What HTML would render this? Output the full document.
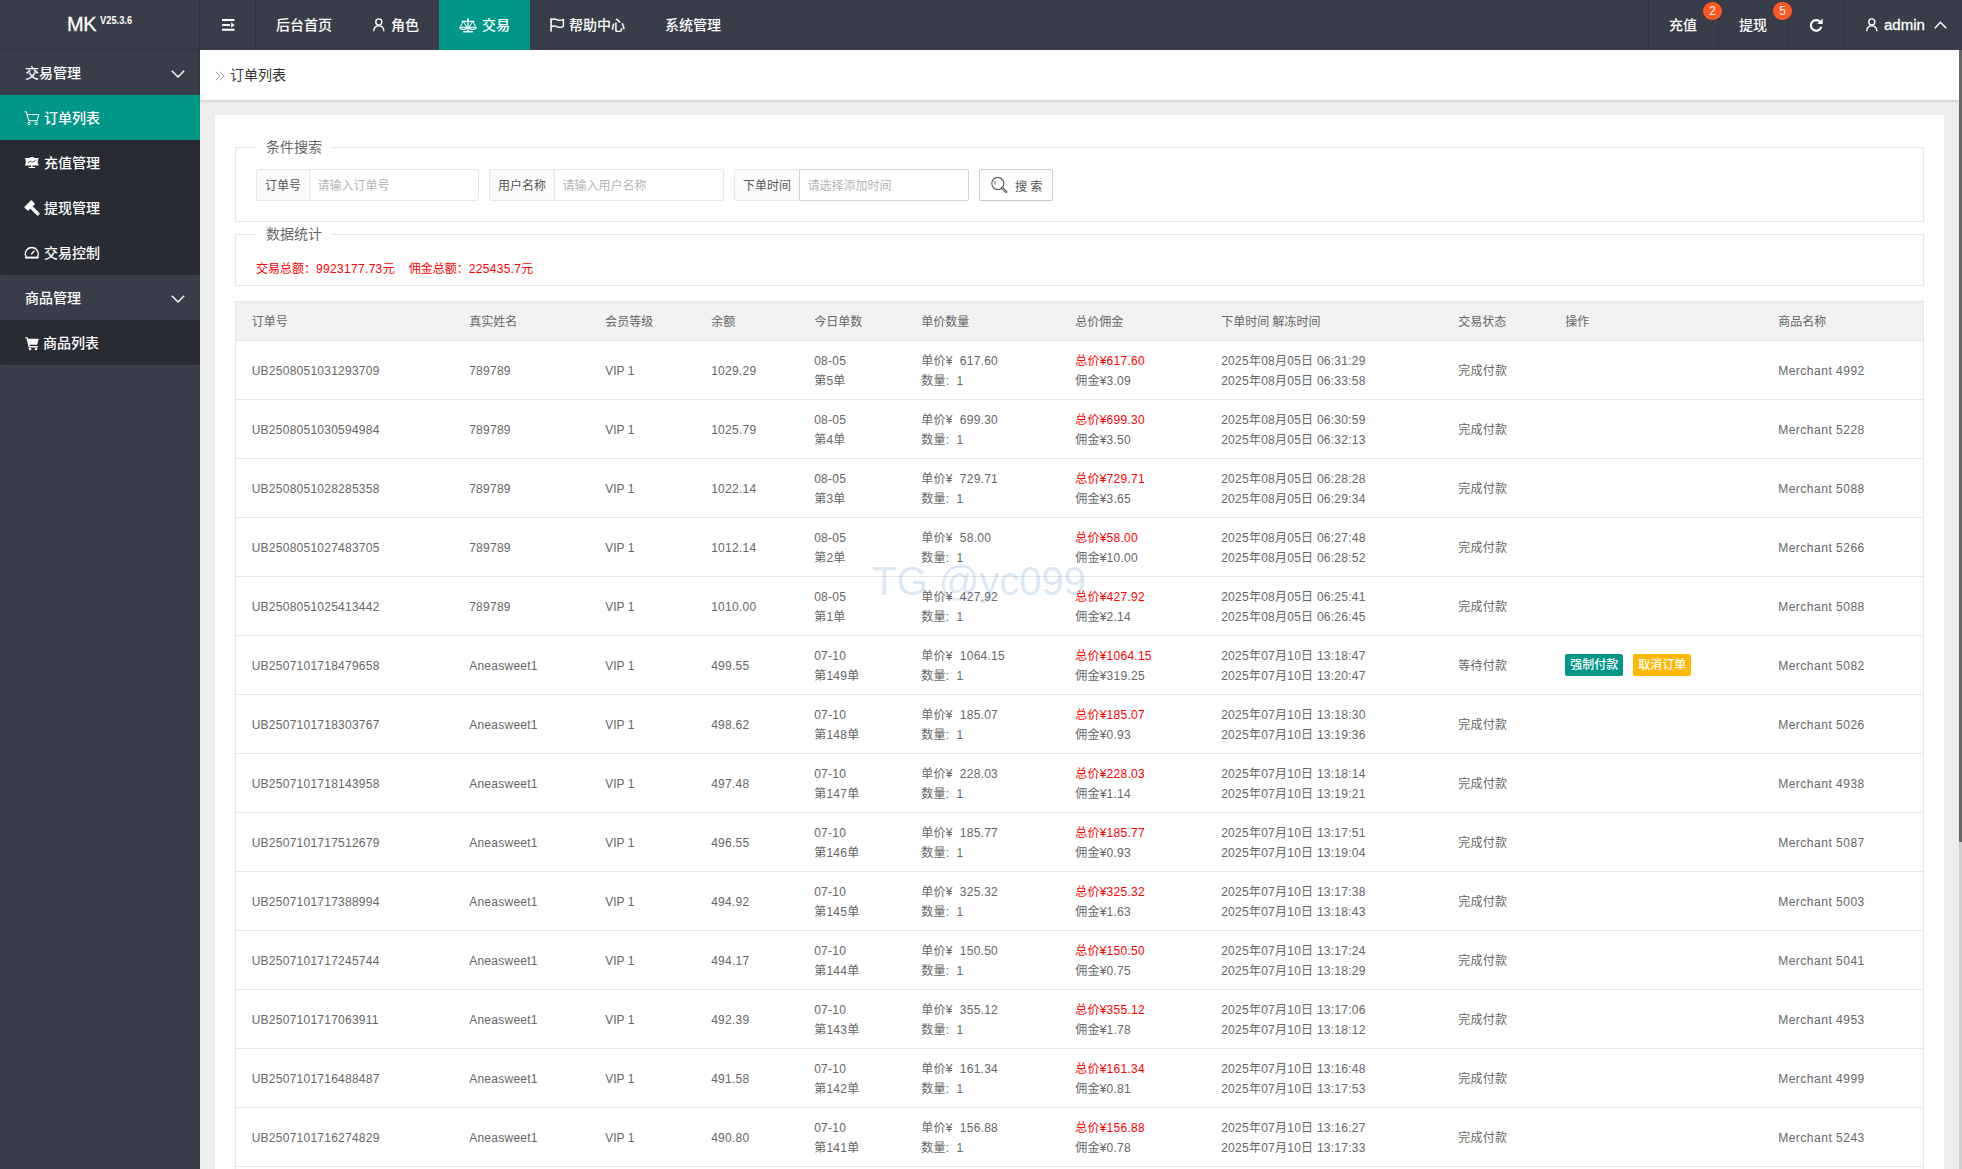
<!DOCTYPE html>
<html lang="zh-CN">
<head>
<meta charset="utf-8">
<title>订单列表</title>
<style>
*{box-sizing:border-box;margin:0;padding:0}
html,body{width:1962px;height:1169px;overflow:hidden;background:#eee}
body{font-family:"Liberation Sans","Noto Sans CJK SC",sans-serif;font-size:14px;color:#333;position:relative;line-height:1}
a{text-decoration:none;color:inherit}
ul{list-style:none}
svg{display:block}

/* ---------- header ---------- */
.header{position:absolute;left:0;top:0;width:1962px;height:50px;background:#393D49;z-index:10}
.logo{position:absolute;left:0;top:0;width:200px;height:50px;color:#fff;border-bottom:1px solid rgba(0,0,0,.16)}
.logo .mk{position:absolute;left:67px;top:13px;font-size:20px;line-height:22px;color:#fff;-webkit-text-stroke:.3px #fff;letter-spacing:-.3px}
.logo .ver{position:absolute;left:100px;top:15px;font-size:10px;line-height:11px;font-weight:bold;color:#fff;transform:scaleX(.93);transform-origin:0 0}
.nav{position:absolute;left:200px;top:0;height:50px}
.nav .it{position:absolute;top:0;height:50px;line-height:50px;color:#fff;font-size:14px;white-space:nowrap;font-weight:500}
.nav .it.on{background:#009688;color:#fff}
.nav .it svg{position:absolute}
.sep{position:absolute;top:0;width:1px;height:50px;background:rgba(0,0,0,.18)}
.badge{position:absolute;top:2px;width:19px;height:18px;border-radius:9px;background:#FF5722;color:#fff;font-size:12px;line-height:18px;text-align:center}

/* ---------- side ---------- */
.side{position:absolute;left:0;top:50px;width:200px;height:1119px;background:#393D49}
.side .grp{position:relative;height:45px;line-height:47px;padding-left:25px;color:#fff;font-size:14px;font-weight:500}
.side .grp svg{position:absolute;left:171px;top:19.6px}
.side .child{background:#282B33;border-radius:2px}
.side .child a{display:block;position:relative;height:45px;line-height:47px;padding-left:44px;color:#fff;font-size:14px;font-weight:500}
.side .child a.on{background:#009688;color:#fff}
.side .child a svg{position:absolute;left:25px;top:15px}

/* ---------- body ---------- */
.crumb{position:absolute;left:200px;top:50px;width:1759px;height:50px;background:#fff;box-shadow:0 1px 3px 0 rgba(0,0,0,.18);line-height:50px;font-size:14px;color:#333}
.crumb .arr{position:absolute;left:15px;top:21px}
.crumb .tt{position:absolute;left:30px;top:0}
.card{position:absolute;left:215px;top:115px;width:1729px;height:1100px;background:#fff;box-shadow:0 1px 2px 0 rgba(0,0,0,.05)}
.fs{position:absolute;left:20px;width:1689px;border:1px solid #e6e6e6}
.fs .lg{position:absolute;left:20px;top:-13px;height:24px;line-height:24px;padding:0 10px;background:#fff;font-size:14px;color:#666}
.grpi{position:absolute;top:21px;height:32px}
.grpi .lb{position:absolute;left:0;top:0;height:32px;line-height:33px;background:#fbfbfb;border:1px solid #e6e6e6;border-radius:2px 0 0 2px;color:#555;font-size:12px;text-align:center}
.grpi .ph{position:absolute;top:0;height:32px;line-height:33px;padding-left:7.5px;background:#fff;border:1px solid #e6e6e6;border-radius:0 2px 2px 0;color:#b5b5b5;font-size:12px}
.sbtn{position:absolute;top:21px;left:743px;width:74px;height:32px;border:1px solid #c9c9c9;border-radius:2px;background:#fff;color:#555;font-size:12px;line-height:33px}
.sbtn svg{position:absolute;left:11px;top:7px}
.sbtn span{position:absolute;left:35px;top:.5px;letter-spacing:3.5px}
.stat{position:absolute;left:20px;top:24px;font-size:12px;line-height:20px;color:#f00;white-space:nowrap}
.stat b{font-weight:normal;letter-spacing:.32px}
.stat i{display:inline-block;width:14px}

table{position:absolute;left:20px;top:186px;width:1689px;border-collapse:collapse;table-layout:fixed;border:1px solid #e6e6e6;font-size:12px;color:#666}
th,td{padding:10px 15px 8px 15.7px;line-height:20px;text-align:left;font-weight:normal;border-bottom:1px solid #e6e6e6;white-space:nowrap;overflow:hidden;vertical-align:middle}
thead tr{background:#f2f2f2}
th{height:39px}
td{height:59px}
tbody td{letter-spacing:.25px}
tbody td:last-child{letter-spacing:.5px}
tbody td:nth-child(3){letter-spacing:0}
.red{color:#f00}
.btn{display:inline-block;position:relative;top:-1px;height:22px;line-height:23px;padding:0 5px;border-radius:2px;color:#fff;font-size:12px;vertical-align:middle;letter-spacing:0;font-weight:500}
.b1{background:#009688;margin-right:10px}
.b2{background:#FFB800}

.wm{position:absolute;left:872px;top:559px;font-size:40px;line-height:44px;color:rgba(30,110,190,.17);white-space:nowrap;z-index:20;font-family:"Liberation Sans",sans-serif}

.sbar{position:absolute;left:1959px;top:50px;width:3px;height:1119px;background:#cdcdcd}
.sbar i{position:absolute;left:0;top:0;width:3px;height:791.6px;background:#666}
</style>
</head>
<body>

<div class="header">
  <div class="logo"><span class="mk">MK</span><span class="ver">V25.3.6</span></div>
  <div class="nav">
    <div class="sep" style="left:-1px"></div>
    <div class="it" style="left:0;width:55px">
      <svg style="left:21px;top:18px" width="14" height="14" viewBox="0 0 14 14"><path d="M1 2h12.5M1 6.9h8M1 11.7h12.5" stroke="#fff" stroke-width="2" fill="none"/><path d="M10.2 4.2L13.6 7l-3.4 2.8z" fill="#fff"/></svg>
    </div>
    <div class="sep" style="left:55px"></div>
    <div class="it" style="left:76px">后台首页</div>
    <div class="it" style="left:191px">
      <svg style="left:-17.6px;top:17.6px" width="12" height="14" viewBox="0 0 12 14"><circle cx="5.8" cy="3.9" r="3" stroke="#fff" stroke-width="1.4" fill="none"/><path d="M0.7 13.2c0.2-3.4 2.1-5.3 5.1-5.3s4.9 1.9 5.1 5.3" stroke="#fff" stroke-width="1.4" fill="none"/></svg>角色</div>
    <div class="it on" style="left:239px;width:91px">
      <svg style="left:19.5px;top:17.5px" width="18" height="15" viewBox="0 0 18 15"><circle cx="9" cy="1.4" r="1.1" fill="#fff"/><path d="M2.6 3.3h12.8M9 2v11.4" stroke="#fff" stroke-width="1.25" fill="none"/><path d="M4.2 13.7h9.6" stroke="#fff" stroke-width="1.5" fill="none"/><path d="M4.4 3.4L1.1 9.2M4.4 3.4l3.3 5.8M13.6 3.4l-3.3 5.8M13.6 3.4l3.3 5.8" stroke="#fff" stroke-width="1" fill="none"/><path d="M0.5 9.2h7.8c-0.5 2.9-7.3 2.9-7.8 0zM9.7 9.2h7.8c-0.5 2.9-7.3 2.9-7.8 0z" stroke="#fff" stroke-width="1.1" fill="none" stroke-linejoin="round"/></svg>
      <span style="position:absolute;left:43px">交易</span></div>
    <div class="it" style="left:369px">
      <svg style="left:-19.4px;top:18.2px" width="15" height="14" viewBox="0 0 15 14"><path d="M1.1 0.3v13.2" stroke="#fff" stroke-width="1.6" fill="none"/><path d="M1.6 1.6c2-1.1 3.8-0.6 5.8 0.2s3.8 0.9 6 -0.4v7c-2.2 1.3-4 1.2-6 0.4s-3.8-1.3-5.8-0.2" stroke="#fff" stroke-width="1.4" fill="none" stroke-linejoin="round"/></svg>帮助中心</div>
    <div class="it" style="left:465px">系统管理</div>
  </div>

  <div class="sep" style="left:1648px"></div>
  <div class="sep" style="left:1718px"></div>
  <div class="sep" style="left:1788px"></div>
  <div class="sep" style="left:1844px"></div>
  <div class="nav" style="left:0">
    <div class="it" style="left:1669px">充值</div>
    <div class="badge" style="left:1703px">2</div>
    <div class="it" style="left:1739px">提现</div>
    <div class="badge" style="left:1773px">5</div>
    <div class="it" style="left:1809px;width:14px">
      <svg style="left:0;top:18px" width="14" height="14" viewBox="0 0 14 14"><path d="M11.5 4.3A5.3 5.3 0 1 0 12.3 8.8" stroke="#fff" stroke-width="2.1" fill="none"/><path d="M13.6 0.6v5.4H8.2z" fill="#fff"/></svg>
    </div>
    <div class="it" style="left:1884px;font-size:15px;-webkit-text-stroke:.3px #fff">
      <svg style="left:-17.6px;top:17.8px" width="12" height="14" viewBox="0 0 12 14"><circle cx="5.8" cy="3.9" r="3" stroke="#fff" stroke-width="1.4" fill="none"/><path d="M0.7 13.2c0.2-3.4 2.1-5.3 5.1-5.3s4.9 1.9 5.1 5.3" stroke="#fff" stroke-width="1.4" fill="none"/></svg>admin
      <svg style="left:50px;top:21px" width="13" height="8" viewBox="0 0 13 8"><path d="M0.8 7.2L6.5 1.2l5.7 6" stroke="#fff" stroke-width="1.4" fill="none"/></svg>
    </div>
  </div>
</div>

<div class="side">
  <div class="grp">交易管理<svg width="14" height="8" viewBox="0 0 14 8"><path d="M0.8 0.8L7 7l6.2-6.2" stroke="#fff" stroke-width="1.4" fill="none"/></svg></div>
  <div class="child">
    <a class="on"><svg style="left:24px;top:16px" width="16" height="15" viewBox="0 0 16 15"><path d="M0.6 0.8h1.7l2.5 9h8.3l1.8-6.4H3.2" stroke="#fff" stroke-width="1.05" fill="none" stroke-linejoin="round"/><circle cx="5" cy="12.6" r="1.25" stroke="#fff" stroke-width="1" fill="none"/><circle cx="12.2" cy="12.6" r="1.25" stroke="#fff" stroke-width="1" fill="none"/></svg>订单列表</a>
    <a><svg style="left:25px;top:17px" width="14" height="12" viewBox="0 0 14 12"><path d="M5 0h3.6v1.2H5zM0 1h13.6v1.3H0zM0.7 2.3h12.2v5H0.7zM0 7.3h13.6v1.3H0zM6.1 8.6h1.4v1.5H6.1zM3.4 10h6.8v1.1H3.4z" fill="#fff"/><path d="M2.8 6l2.6-1.7 2 0.9 3.2-2" stroke="#282B33" stroke-width="0.8" fill="none"/></svg>充值管理</a>
    <a><svg style="left:24px;top:15px" width="16" height="16" viewBox="0 0 16 16"><g transform="translate(5.6 5.6) rotate(45)" fill="#fff"><rect x="-2.7" y="-5.1" width="5.4" height="10.2" rx="0.7"/><rect x="2" y="-1.7" width="11.2" height="3.4" rx="1.5"/></g></svg>提现管理</a>
    <a><svg style="left:24px;top:16px" width="16" height="14" viewBox="0 0 16 14"><path d="M2.2 11A6.4 6.4 0 1 1 13.4 11" stroke="#fff" stroke-width="1.3" fill="none"/><path d="M1 11.6h13.6" stroke="#fff" stroke-width="1.9" fill="none"/><path d="M7.2 8.4l3.2-3.6" stroke="#fff" stroke-width="1.4" fill="none"/></svg>交易控制</a>
  </div>
  <div class="grp">商品管理<svg width="14" height="8" viewBox="0 0 14 8"><path d="M0.8 0.8L7 7l6.2-6.2" stroke="#fff" stroke-width="1.4" fill="none"/></svg></div>
  <div class="child">
    <a style="padding-left:43px"><svg style="top:15.7px" width="15" height="15" viewBox="0 0 15 15"><path d="M0.4 1.2h2.2l0.5 1.6h10.6l-1.5 6H4.4l0.3 1.3h8v1.3H3.6L1.6 2.5H0.4z" fill="#fff"/><circle cx="5" cy="13" r="1.3" fill="#fff"/><circle cx="11" cy="13" r="1.3" fill="#fff"/></svg>商品列表</a>
  </div>
</div>

<div class="crumb"><svg class="arr" width="10" height="10" viewBox="0 0 10 10"><path d="M0.8 0.6L4.6 5 0.8 9.4M5 0.6L8.8 5 5 9.4" stroke="#999" stroke-width="1" fill="none"/></svg><span class="tt">订单列表</span></div>

<div class="card">
  <div class="fs" style="top:32px;height:75px">
    <div class="lg">条件搜索</div>
    <div class="grpi" style="left:20px;width:223px"><div class="lb" style="width:54px">订单号</div><div class="ph" style="left:53px;width:170px">请输入订单号</div></div>
    <div class="grpi" style="left:253px;width:235px"><div class="lb" style="width:66px">用户名称</div><div class="ph" style="left:65px;width:170px">请输入用户名称</div></div>
    <div class="grpi" style="left:498px;width:235px"><div class="lb" style="width:66px">下单时间</div><div class="ph" style="left:65px;width:170px;border-color:#d2d2d2">请选择添加时间</div></div>
    <div class="sbtn"><svg width="17" height="17" viewBox="0 0 17 17"><circle cx="6.8" cy="6.5" r="6" stroke="#555" stroke-width="1.1" fill="none"/><path d="M11.2 10.9l4 4" stroke="#555" stroke-width="2.5" stroke-linecap="round" fill="none"/><path d="M11.4 11.1l3.7 3.7" stroke="#fff" stroke-width="0.7" stroke-linecap="round" fill="none"/><path d="M4.8 3.8c-1.1 1-1.2 2.8-0.5 3.9" stroke="#555" stroke-width="0.9" fill="none"/></svg><span>搜索</span></div>
  </div>
  <div class="fs" style="top:119px;height:52px">
    <div class="lg">数据统计</div>
    <div class="stat">交易总额：<b>9923177.73</b>元<i></i>佣金总额：<b>225435.7</b>元</div>
  </div>

  <table>
    <colgroup><col style="width:218px"><col style="width:136px"><col style="width:106px"><col style="width:103px"><col style="width:107px"><col style="width:154px"><col style="width:146px"><col style="width:237px"><col style="width:107px"><col style="width:213px"><col></colgroup>
    <thead><tr><th>订单号</th><th>真实姓名</th><th>会员等级</th><th>余额</th><th>今日单数</th><th>单价数量</th><th>总价佣金</th><th>下单时间 解冻时间</th><th>交易状态</th><th>操作</th><th>商品名称</th></tr></thead>
    <tbody>
<tr><td>UB2508051031293709</td><td>789789</td><td>VIP 1</td><td>1029.29</td><td>08-05<br>第5单</td><td>单价¥&nbsp; 617.60<br>数量:&nbsp; 1</td><td><span class="red">总价¥617.60</span><br>佣金¥3.09</td><td>2025年08月05日 06:31:29<br>2025年08月05日 06:33:58</td><td>完成付款</td><td></td><td>Merchant 4992</td></tr>
<tr><td>UB2508051030594984</td><td>789789</td><td>VIP 1</td><td>1025.79</td><td>08-05<br>第4单</td><td>单价¥&nbsp; 699.30<br>数量:&nbsp; 1</td><td><span class="red">总价¥699.30</span><br>佣金¥3.50</td><td>2025年08月05日 06:30:59<br>2025年08月05日 06:32:13</td><td>完成付款</td><td></td><td>Merchant 5228</td></tr>
<tr><td>UB2508051028285358</td><td>789789</td><td>VIP 1</td><td>1022.14</td><td>08-05<br>第3单</td><td>单价¥&nbsp; 729.71<br>数量:&nbsp; 1</td><td><span class="red">总价¥729.71</span><br>佣金¥3.65</td><td>2025年08月05日 06:28:28<br>2025年08月05日 06:29:34</td><td>完成付款</td><td></td><td>Merchant 5088</td></tr>
<tr><td>UB2508051027483705</td><td>789789</td><td>VIP 1</td><td>1012.14</td><td>08-05<br>第2单</td><td>单价¥&nbsp; 58.00<br>数量:&nbsp; 1</td><td><span class="red">总价¥58.00</span><br>佣金¥10.00</td><td>2025年08月05日 06:27:48<br>2025年08月05日 06:28:52</td><td>完成付款</td><td></td><td>Merchant 5266</td></tr>
<tr><td>UB2508051025413442</td><td>789789</td><td>VIP 1</td><td>1010.00</td><td>08-05<br>第1单</td><td>单价¥&nbsp; 427.92<br>数量:&nbsp; 1</td><td><span class="red">总价¥427.92</span><br>佣金¥2.14</td><td>2025年08月05日 06:25:41<br>2025年08月05日 06:26:45</td><td>完成付款</td><td></td><td>Merchant 5088</td></tr>
<tr><td>UB2507101718479658</td><td>Aneasweet1</td><td>VIP 1</td><td>499.55</td><td>07-10<br>第149单</td><td>单价¥&nbsp; 1064.15<br>数量:&nbsp; 1</td><td><span class="red">总价¥1064.15</span><br>佣金¥319.25</td><td>2025年07月10日 13:18:47<br>2025年07月10日 13:20:47</td><td>等待付款</td><td><a class="btn b1">强制付款</a><a class="btn b2">取消订单</a></td><td>Merchant 5082</td></tr>
<tr><td>UB2507101718303767</td><td>Aneasweet1</td><td>VIP 1</td><td>498.62</td><td>07-10<br>第148单</td><td>单价¥&nbsp; 185.07<br>数量:&nbsp; 1</td><td><span class="red">总价¥185.07</span><br>佣金¥0.93</td><td>2025年07月10日 13:18:30<br>2025年07月10日 13:19:36</td><td>完成付款</td><td></td><td>Merchant 5026</td></tr>
<tr><td>UB2507101718143958</td><td>Aneasweet1</td><td>VIP 1</td><td>497.48</td><td>07-10<br>第147单</td><td>单价¥&nbsp; 228.03<br>数量:&nbsp; 1</td><td><span class="red">总价¥228.03</span><br>佣金¥1.14</td><td>2025年07月10日 13:18:14<br>2025年07月10日 13:19:21</td><td>完成付款</td><td></td><td>Merchant 4938</td></tr>
<tr><td>UB2507101717512679</td><td>Aneasweet1</td><td>VIP 1</td><td>496.55</td><td>07-10<br>第146单</td><td>单价¥&nbsp; 185.77<br>数量:&nbsp; 1</td><td><span class="red">总价¥185.77</span><br>佣金¥0.93</td><td>2025年07月10日 13:17:51<br>2025年07月10日 13:19:04</td><td>完成付款</td><td></td><td>Merchant 5087</td></tr>
<tr><td>UB2507101717388994</td><td>Aneasweet1</td><td>VIP 1</td><td>494.92</td><td>07-10<br>第145单</td><td>单价¥&nbsp; 325.32<br>数量:&nbsp; 1</td><td><span class="red">总价¥325.32</span><br>佣金¥1.63</td><td>2025年07月10日 13:17:38<br>2025年07月10日 13:18:43</td><td>完成付款</td><td></td><td>Merchant 5003</td></tr>
<tr><td>UB2507101717245744</td><td>Aneasweet1</td><td>VIP 1</td><td>494.17</td><td>07-10<br>第144单</td><td>单价¥&nbsp; 150.50<br>数量:&nbsp; 1</td><td><span class="red">总价¥150.50</span><br>佣金¥0.75</td><td>2025年07月10日 13:17:24<br>2025年07月10日 13:18:29</td><td>完成付款</td><td></td><td>Merchant 5041</td></tr>
<tr><td>UB2507101717063911</td><td>Aneasweet1</td><td>VIP 1</td><td>492.39</td><td>07-10<br>第143单</td><td>单价¥&nbsp; 355.12<br>数量:&nbsp; 1</td><td><span class="red">总价¥355.12</span><br>佣金¥1.78</td><td>2025年07月10日 13:17:06<br>2025年07月10日 13:18:12</td><td>完成付款</td><td></td><td>Merchant 4953</td></tr>
<tr><td>UB2507101716488487</td><td>Aneasweet1</td><td>VIP 1</td><td>491.58</td><td>07-10<br>第142单</td><td>单价¥&nbsp; 161.34<br>数量:&nbsp; 1</td><td><span class="red">总价¥161.34</span><br>佣金¥0.81</td><td>2025年07月10日 13:16:48<br>2025年07月10日 13:17:53</td><td>完成付款</td><td></td><td>Merchant 4999</td></tr>
<tr><td>UB2507101716274829</td><td>Aneasweet1</td><td>VIP 1</td><td>490.80</td><td>07-10<br>第141单</td><td>单价¥&nbsp; 156.88<br>数量:&nbsp; 1</td><td><span class="red">总价¥156.88</span><br>佣金¥0.78</td><td>2025年07月10日 13:16:27<br>2025年07月10日 13:17:33</td><td>完成付款</td><td></td><td>Merchant 5243</td></tr>
<tr><td colspan="11">&nbsp;</td></tr>
    </tbody>
  </table>
</div>

<div class="wm">TG @yc099</div>
<div class="sbar"><i></i></div>

</body>
</html>
